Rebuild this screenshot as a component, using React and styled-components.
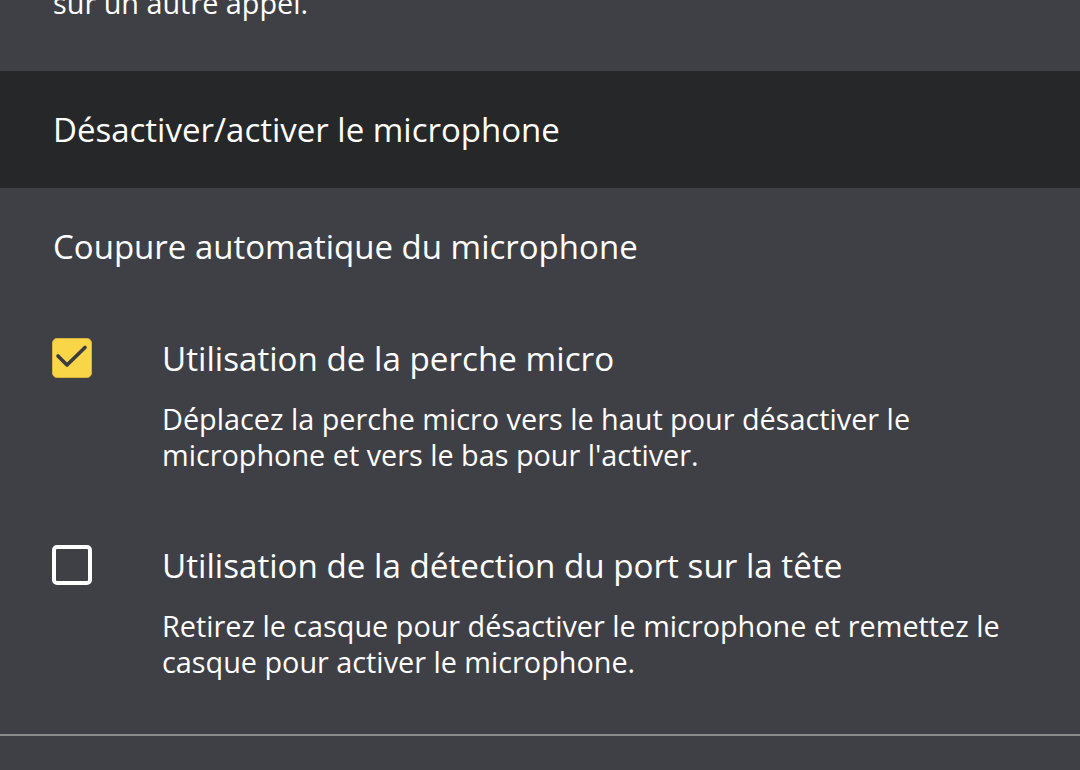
import React, { useState } from 'react'
import styled, { createGlobalStyle } from 'styled-components'

const Global = createGlobalStyle`
    html, body {
        margin: 0;
        padding: 0;
        background: #3f4045;
        overflow: hidden;
    }
    body {
        font-family: "Open Sans", "Noto Sans", sans-serif;
        color: #fff;
    }
`

const options = [
    {
        id: 'boom',
        title: 'Utilisation de la perche micro',
        text: "Déplacez la perche micro vers le haut pour désactiver le microphone et vers le bas pour l'activer.",
        checked: true,
    },
    {
        id: 'head',
        title: 'Utilisation de la détection du port sur la tête',
        text: 'Retirez le casque pour désactiver le microphone et remettez le casque pour activer le microphone.',
        checked: false,
    },
]

function App() {
    const [values, setValues] = useState(options.map(o => o.checked))

    const toggle = (index) => {
        let list = [...values]
        list[index] = !list[index]
        setValues(list)
    }

    return (
        <>
            <Global />
            <Page>
                <TopSection>
                    <TopText>
                        Le microphone est désactivé pendant que vous êtes
                        <br />
                        sur un autre appel.
                    </TopText>
                </TopSection>

                <SectionHeader>Désactiver/activer le microphone</SectionHeader>

                <Group>
                    <GroupTitle>Coupure automatique du microphone</GroupTitle>
                    <OptionList>
                        {options.map((o, index) => (
                            <Option key={o.id} onClick={() => toggle(index)}>
                                <Box checked={values[index]}>
                                    {values[index] && (
                                        <svg width="38" height="38" viewBox="1 1 38 38">
                                            <path
                                                d="M6 18 L15 27 L33 9.5"
                                                fill="none"
                                                stroke="#3a3b40"
                                                strokeWidth="3.6"
                                                strokeLinecap="round"
                                                strokeLinejoin="round"
                                            />
                                        </svg>
                                    )}
                                </Box>
                                <OptionBody>
                                    <OptionTitle>{o.title}</OptionTitle>
                                    <OptionText>{o.text}</OptionText>
                                </OptionBody>
                            </Option>
                        ))}
                    </OptionList>
                </Group>
                <Divider />
            </Page>
        </>
    )
}

const Page = styled.div`
    width: 1080px;
    height: 770px;
    overflow: hidden;
    display: flex;
    flex-direction: column;
`
const TopSection = styled.div`
    height: 71px;
    flex-shrink: 0;
    display: flex;
    align-items: flex-end;
    overflow: hidden;
`
const TopText = styled.div`
    padding: 0 0 50px 53px;
    font-size: 28.8px;
    line-height: 36px;
    font-weight: 500;
`
const SectionHeader = styled.div`
    height: 117px;
    flex-shrink: 0;
    background-color: #262729;
    display: flex;
    align-items: center;
    padding-left: 53px;
    font-size: 33px;
    font-weight: 500;
`
const Group = styled.div`
    padding: 39px 0 0 53px;
    display: flex;
    flex-direction: column;
`
const GroupTitle = styled.div`
    font-size: 33px;
    line-height: 40px;
    font-weight: 500;
    margin-bottom: 71px;
`
const OptionList = styled.div`
    display: flex;
    flex-direction: column;
    gap: 72px;
`
const Option = styled.div`
    display: flex;
    align-items: flex-start;
    cursor: pointer;
`
const Box = styled.div`
    width: 40px;
    height: 40px;
    box-sizing: border-box;
    margin-left: -1px;
    border-radius: 5px;
    border: ${props => props.checked ? '1px solid #d9b43c' : '4px solid #fff'};
    background-color: ${props => props.checked ? '#f9d548' : 'transparent'};
    display: flex;
    align-items: center;
    justify-content: center;
    flex-shrink: 0;
`
const OptionBody = styled.div`
    margin-left: 70px;
    width: 860px;
`
const OptionTitle = styled.div`
    font-size: 33.2px;
    line-height: 42px;
    font-weight: 500;
    margin-bottom: 21px;
`
const OptionText = styled.div`
    font-size: 28.8px;
    line-height: 36px;
    font-weight: 500;
`
const Divider = styled.div`
    flex-shrink: 0;
    height: 2px;
    background-color: #8a8b8d;
    margin-top: 54px;
`

export default App
